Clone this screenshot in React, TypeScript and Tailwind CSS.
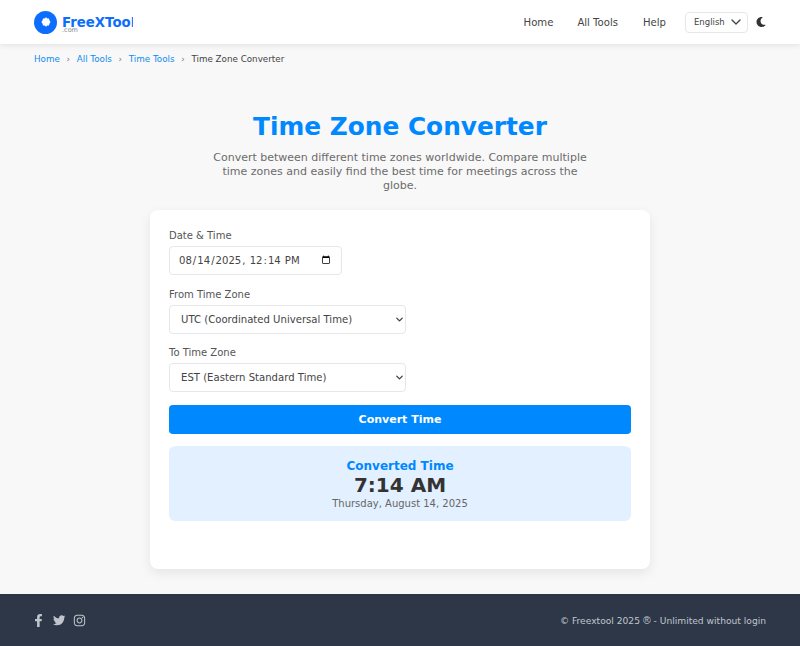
import { ChevronDown } from "lucide-react";
import { FaFacebookF, FaTwitter, FaInstagram, FaMoon } from "react-icons/fa";

const font = "font-['DejaVu_Sans',sans-serif]";

const Logo = () => (
  <div className="flex items-center gap-[5px]">
    <div className="flex h-[23px] w-[23px] items-center justify-center rounded-full bg-[#0d6efd]">
      <svg width="10" height="10" viewBox="0 0 10 10" fill="#fff">
        <path d="M5 .3 6.3 1.4 8 1.4 8.4 3.2 9.6 5 8.4 6.8 8 8.6 6.3 8.6 5 9.7 3.7 8.6 2 8.6 1.6 6.8.4 5 1.6 3.2 2 1.4 3.7 1.4z" />
      </svg>
    </div>
    <div className="h-[11px] w-[71px] overflow-hidden">
      <span className="block text-[13.3px] leading-[11px] font-bold whitespace-nowrap text-[#0d6efd]">FreeXTool</span>
    </div>
    <span className="absolute top-[27px] left-[62px] text-[6.5px] leading-none text-[#888]">.com</span>
  </div>
);

const Header = () => (
  <header className="relative z-10 flex h-[44px] items-center justify-between bg-white px-[34px] shadow-[0_1px_6px_rgba(0,0,0,0.1)]">
    <Logo />
    <nav className="flex items-center text-[10.1px] text-[#444]">
      <a className="mt-[1px] mr-[24px]">Home</a>
      <a className="mt-[1px] mr-[25px]">All Tools</a>
      <a className="mt-[1px] mr-[19px]">Help</a>
      <div className="mr-[8px] flex h-[21px] w-[63px] items-center justify-between rounded-[4px] border border-[#e5e7eb] pr-[3px] pl-[8px] text-[8.5px]">
        English
        <ChevronDown size={16} strokeWidth={2} />
      </div>
      <FaMoon size={10} color="#333" />
    </nav>
  </header>
);

const Breadcrumb = () => (
  <div className="flex items-center px-[34px] pt-[10px] text-[8.75px] leading-[11px] text-[#444]">
    <a className="text-[#0d8bf0]">Home</a>
    <span className="mx-[6.7px] text-[#777]">›</span>
    <a className="text-[#0d8bf0]">All Tools</a>
    <span className="mx-[6.7px] text-[#777]">›</span>
    <a className="text-[#0d8bf0]">Time Tools</a>
    <span className="mx-[6.7px] text-[#777]">›</span>
    <span>Time Zone Converter</span>
  </div>
);

const fieldClass =
  "h-[29px] rounded-[4px] border border-[#e5e7eb] bg-white text-[10.1px] text-[#444]";
const labelClass = "block text-[10px] leading-[13px] text-[#555]";

const Select = ({ value }: { value: string }) => (
  <div className="relative mt-[4px] w-[237px]">
    <select className={`block w-full appearance-none px-[11px] ${fieldClass}`}>
      <option>{value}</option>
    </select>
    <ChevronDown size={11} strokeWidth={3} className="pointer-events-none absolute top-[9px] right-[1px] text-[#444]" />
  </div>
);

export default function App() {
  return (
    <div className={`flex h-[646px] flex-col bg-[#f8f8f8] ${font}`}>
      <Header />
      <Breadcrumb />
      <main className="flex flex-1 flex-col items-center">
        <h1 className="mt-[47px] text-[24.8px] leading-[30px] font-bold text-[#0088ff]">Time Zone Converter</h1>
        <p className="mt-[9px] w-[380px] text-center text-[11px] leading-[14px] text-[#6b6b6b]">
          Convert between different time zones worldwide. Compare multiple time zones and easily find the best time for meetings across the globe.
        </p>
        <section className="mt-[17px] h-[359px] w-[500px] rounded-[8px] bg-white p-[19px] shadow-[0_4px_12px_rgba(0,0,0,0.08)]">
          <label className={labelClass}>Date &amp; Time</label>
          <input
            type="datetime-local"
            defaultValue="2025-08-14T12:14"
            className={`mt-[4px] block w-[173px] px-[8px] ${fieldClass}`}
          />
          <label className={`mt-[12.7px] ${labelClass}`}>From Time Zone</label>
          <Select value="UTC (Coordinated Universal Time)" />
          <label className={`mt-[12.7px] ${labelClass}`}>To Time Zone</label>
          <Select value="EST (Eastern Standard Time)" />
          <button className="mt-[13px] h-[29px] w-full rounded-[4px] bg-[#0088ff] text-[11px] font-bold text-white">
            Convert Time
          </button>
          <div className="mt-[12px] flex h-[75px] flex-col items-center rounded-[6px] bg-[#e3f0ff] pt-[13px]">
            <div className="text-[12px] leading-[14px] font-bold text-[#0088ff]">Converted Time</div>
            <div className="text-[20px] leading-[25px] font-bold text-[#333]">7:14 AM</div>
            <div className="text-[10px] leading-[12px] text-[#666]">Thursday, August 14, 2025</div>
          </div>
        </section>
      </main>
      <footer className="flex h-[52px] items-center justify-between bg-[#2d3748] px-[34px] text-[#c0c5cc]">
        <div className="flex items-center gap-[7.5px] text-[13px]">
          <FaFacebookF className="ml-[-2px]" />
          <FaTwitter className="text-[12.5px]" />
          <FaInstagram />
        </div>
        <span className="pt-[1px] text-[9.15px] leading-[12px]">
          © Freextool 2025 <span className="font-['Liberation_Sans',sans-serif] text-[10.5px] leading-[12px]">®</span> - Unlimited without login
        </span>
      </footer>
    </div>
  );
}
